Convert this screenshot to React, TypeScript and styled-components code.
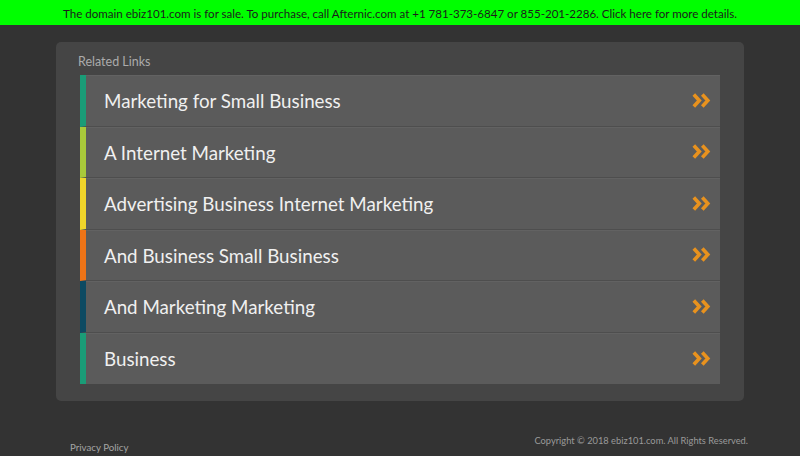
import React from "react";
import styled, { createGlobalStyle } from "styled-components";

const Global = createGlobalStyle`
  html, body { margin: 0; padding: 0; background: #333333; }
  body { font-family: Lato, "Open Sans", sans-serif; }
`;

const Page = styled.div`
  min-height: 456px;
  display: flex;
  flex-direction: column;
`;

const SaleBar = styled.a`
  display: block;
  height: 25px;
  line-height: 28px;
  background: #00ff00;
  color: #1c1c1c;
  text-align: center;
  font-size: 11.55px;
  text-decoration: none;
`;

const Panel = styled.section`
  width: 688px;
  margin: 17px auto 0;
  box-sizing: border-box;
  background: #454545;
  border-radius: 5px;
  padding: 11px 24px 17px;
`;

const Title = styled.div`
  font-size: 12.5px;
  color: #ababab;
  margin-left: -2px;
  height: 22px;
  line-height: 18px;
`;

const List = styled.ul`
  list-style: none;
  margin: 0;
  padding: 0;
`;

const Row = styled.li<{ $accent: string }>`
  box-sizing: border-box;
  height: 51.5px;
  display: flex;
  align-items: center;
  background: #5b5b5b;
  border-left: 6px solid ${(p) => p.$accent};
  border-bottom: 1px solid #4e4e4e;
  box-shadow: inset 0 1px 0 #626262;
  padding: 0 9px 0 18px;
  &:last-child { border-bottom: none; }
`;

const Label = styled.span`
  flex: 1;
  font-size: 18.75px;
  color: #f0f0f0;
  padding-top: 1px;
`;

const Footer = styled.footer`
  display: flex;
  justify-content: space-between;
  padding: 0 52px 0 70px;
  margin-top: 34px;
  color: #a5a5a5;
`;

const Privacy = styled.span`
  font-size: 9.7px;
  padding-top: 6px;
`;

const Copy = styled.span`
  font-size: 9.3px;
  color: #9a9a9a;
`;

const Chevrons = () => (
  <svg width="19" height="15" viewBox="0 0 19 15">
    <path d="M1.8 1.5 L7.3 7.5 L1.8 13.5" fill="none" stroke="#e8921e" strokeWidth="3.6" />
    <path d="M10.3 1.5 L15.8 7.5 L10.3 13.5" fill="none" stroke="#e8921e" strokeWidth="3.6" />
  </svg>
);

const links: [string, string][] = [
  ["Marketing for Small Business", "#1a9c77"],
  ["A Internet Marketing", "#a9c93a"],
  ["Advertising Business Internet Marketing", "#f0d52a"],
  ["And Business Small Business", "#ee7418"],
  ["And Marketing Marketing", "#0d4a62"],
  ["Business", "#1a9c77"],
];

export default function App() {
  return (
    <Page>
      <Global />
      <SaleBar href="#">
        The domain ebiz101.com is for sale. To purchase, call Afternic.com at +1 781-373-6847 or 855-201-2286. Click here for more details.
      </SaleBar>
      <Panel>
        <Title>Related Links</Title>
        <List>
          {links.map(([t, c]) => (
            <Row key={t} $accent={c}>
              <Label>{t}</Label>
              <Chevrons />
            </Row>
          ))}
        </List>
      </Panel>
      <Footer>
        <Privacy>Privacy Policy</Privacy>
        <Copy>Copyright © 2018 ebiz101.com. All Rights Reserved.</Copy>
      </Footer>
    </Page>
  );
}
